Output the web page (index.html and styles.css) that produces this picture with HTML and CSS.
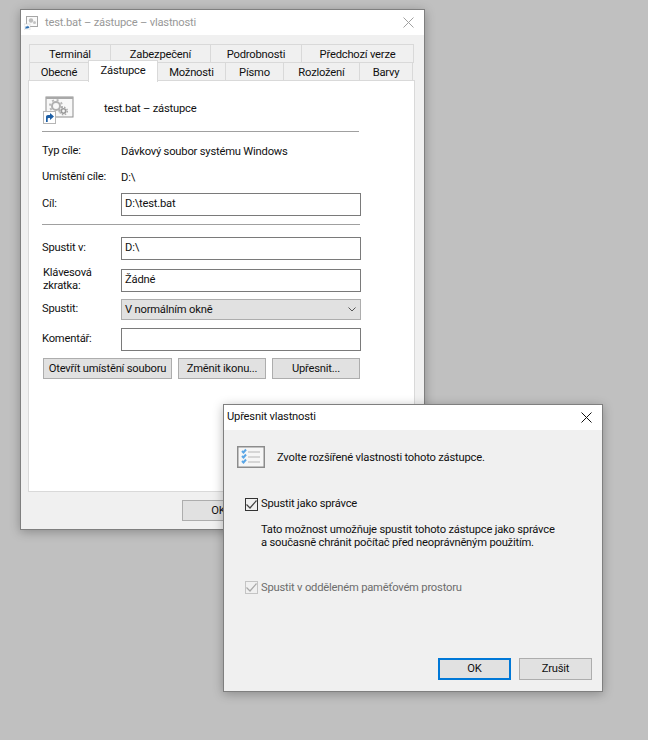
FILE: index.html
```html
<!DOCTYPE html>
<html lang="cs">
<head>
<meta charset="utf-8">
<title>test.bat – zástupce – vlastnosti</title>
<link rel="stylesheet" href="styles.css">
</head>
<body>
<section class="window props">
  <header class="titlebar inactive">
    <svg class="title-icon" width="14" height="14" viewBox="0 0 14 14">
      <rect x="2.5" y="0.5" width="11" height="10" fill="#fafafa" stroke="#a6a6a6"/>
      <circle cx="7" cy="4.5" r="2.2" fill="#bdbdbd"/><circle cx="10.5" cy="6.5" r="1.5" fill="#c4c4c4"/>
      <rect x="0" y="8" width="6" height="6" fill="#fff" stroke="#ccc" stroke-width="0.5"/>
      <path d="M1.5 13v-2.5h2v-1l2 1.8-2 1.6v-1h-1v1.1z" fill="#2a6db0"/>
    </svg>
    <span class="title-text">test.bat – zástupce – vlastnosti</span>
    <svg class="close" width="11" height="11" viewBox="0 0 11 11"><path d="M0.5 0.5l10 10M10.5 0.5l-10 10" stroke="#a0a0a0" fill="none"/></svg>
  </header>
  <div class="client">
    <div class="tabs tabs-back">
      <span class="tab t-term">Terminál</span>
      <span class="tab t-zab">Zabezpečení</span>
      <span class="tab t-pod">Podrobnosti</span>
      <span class="tab t-pre">Předchozí verze</span>
    </div>
    <div class="tabs tabs-front">
      <span class="tab t-obe">Obecné</span>
      <span class="tab active t-zas">Zástupce</span>
      <span class="tab t-moz">Možnosti</span>
      <span class="tab t-pis">Písmo</span>
      <span class="tab t-roz">Rozložení</span>
      <span class="tab t-bar">Barvy</span>
    </div>
    <div class="panel">
      <div class="panel-head">
        <svg class="shortcut-icon" width="32" height="32" viewBox="0 0 32 32">
          <rect x="3" y="1" width="27" height="20" fill="#f8f8f8" stroke="#8f8f8f" stroke-width="1"/>
          <rect x="3" y="1" width="27" height="2" fill="#a8a8a8"/>
          <circle cx="13" cy="10" r="4" fill="none" stroke="#b0b0b0" stroke-width="2"/>
          <circle cx="13" cy="10" r="6" fill="none" stroke="#b8b8b8" stroke-width="2" stroke-dasharray="2 2.7"/>
          <circle cx="20.5" cy="15" r="2.2" fill="none" stroke="#9a9a9a" stroke-width="1.6"/>
          <circle cx="20.5" cy="15" r="3.8" fill="none" stroke="#a8a8a8" stroke-width="1.4" stroke-dasharray="1.5 1.5"/>
          <rect x="0.5" y="15.5" width="12" height="12" fill="#fff" stroke="#b5b5b5"/>
          <path d="M3 26v-5.5q0-1.5 2-1.5h2v-2l4 3.5-4 3.5v-2h-1.500q-.8 0-.8 1v3z" fill="#1d5fa6"/>
        </svg>
        <span class="head-name">test.bat – zástupce</span>
      </div>
      <div class="rule"></div>
      <div class="info-row"><span class="lab">Typ cíle:</span><span>Dávkový soubor systému Windows</span></div>
      <div class="info-row"><span class="lab">Umístění cíle:</span><span>D:\</span></div>
      <div class="field-row first"><span class="lab">Cíl:</span><div class="input">D:\test.bat</div></div>
      <div class="rule rule-second"></div>
      <div class="field-row spaced"><span class="lab">Spustit v:</span><div class="input">D:\</div></div>
      <div class="field-row"><span class="lab two">Klávesová zkratka:</span><div class="input">Žádné</div></div>
      <div class="field-row short"><span class="lab">Spustit:</span>
        <div class="select">V normálním okně
          <svg width="8" height="5" viewBox="0 0 8 5"><path d="M0.500 0.500l3.500 3.500 3.500-3.500" fill="none" stroke="#555"/></svg>
        </div>
      </div>
      <div class="field-row"><span class="lab">Komentář:</span><div class="input"></div></div>
      <div class="btn-row">
        <button class="btn w-open">Otevřít umístění souboru</button>
        <button class="btn w-icon">Změnit ikonu...</button>
        <button class="btn w-adv">Upřesnit...</button>
      </div>
    </div>
    <div class="props-foot"><button class="btn w-ok">OK</button></div>
  </div>
</section>

<section class="window adv">
  <header class="titlebar">
    <span class="title-text dark">Upřesnit vlastnosti</span>
    <svg class="close" width="11" height="11" viewBox="0 0 11 11"><path d="M0.500 0.500l10 10M10.500 0.500l-10 10" stroke="#111" fill="none"/></svg>
  </header>
  <div class="adv-body">
    <div class="adv-head">
      <svg width="28" height="22" viewBox="0 0 28 22">
        <rect x="0.750" y="0.750" width="26.500" height="20.500" fill="#f6f6f6" stroke="#8c8c8c" stroke-width="1.500"/>
        <rect x="11" y="5" width="12" height="2" fill="#d6d6d6"/>
        <rect x="11" y="10" width="12" height="2" fill="#d6d6d6"/>
        <rect x="11" y="15" width="12" height="2" fill="#d6d6d6"/>
        <path d="M5 5l1.500 1.500 2.500-3M5 10l1.500 1.500 2.500-3M5 15l1.500 1.500 2.500-3" fill="none" stroke="#5aa6e6" stroke-width="2"/>
      </svg>
      <span>Zvolte rozšířené vlastnosti tohoto zástupce.</span>
    </div>
    <label class="check">
      <span class="box"><svg width="11" height="9" viewBox="0 0 11 9"><path d="M0.500 4.500l3.500 3.500 6.500-7.500" fill="none" stroke="#444" stroke-width="1.200"/></svg></span>
      <span class="check-text">Spustit jako správce</span>
    </label>
    <p class="desc">Tato možnost umožňuje spustit tohoto zástupce jako správce<br>a současně chránit počítač před neoprávněným použitím.</p>
    <label class="check disabled">
      <span class="box"><svg width="11" height="9" viewBox="0 0 11 9"><path d="M0.500 4.500l3.500 3.500 6.500-7.500" fill="none" stroke="#a8a8a8" stroke-width="1.200"/></svg></span>
      <span>Spustit v odděleném paměťovém prostoru</span>
    </label>
    <div class="adv-foot">
      <button class="btn default">OK</button>
      <button class="btn cancel">Zrušit</button>
    </div>
  </div>
</section>
</body>
</html>
```
FILE: styles.css
```css
* { box-sizing: border-box; }
html, body { margin: 0; height: 100%; }
body {
  position: relative;
  width: 648px;
  height: 740px;
  overflow: hidden;
  background: #c0c0c0;
  font-family: Roboto, "Liberation Sans", sans-serif;
  font-size: 11.2px;
  letter-spacing: -0.2px;
  color: #111;
}
.window {
  position: absolute;
  background: #f0f0f0;
  border: 1px solid #7f7f7f;
  box-shadow: 0 2px 10px rgba(0, 0, 0, .28);
  display: flex;
  flex-direction: column;
}
.props { left: 20px; top: 9px; width: 405px; height: 521px; }
.adv { left: 223px; top: 404px; width: 380px; height: 288px; }

.titlebar {
  height: 25px;
  background: #fff;
  display: flex;
  align-items: center;
  padding: 0 10px 0 3px;
  flex: none;
}
.adv .titlebar .title-text { margin-top: -2px; }
.title-icon { margin: 0 7px 0 0; }
.title-text { color: #999; flex: 1; }
.title-text.dark { color: #111; }
.close { flex: none; }

.client { flex: 1; padding: 9px 9px 0 7px; display: flex; flex-direction: column; }
.tabs { display: flex; height: 18px; padding-left: 1px; }
.tab {
  background: #f0f0f0;
  border: 1px solid #d9d9d9;
  border-bottom: 0;
  margin-right: -1px;
  display: flex;
  align-items: center;
  justify-content: center;
  height: 19px;
  flex: none;
}
.t-term { width: 82px; }
.t-zab { width: 101px; }
.t-pod { width: 92px; }
.t-pre { width: 113px; }
.t-obe { width: 60px; }
.t-zas { width: 70px; }
.t-moz { width: 69px; }
.t-pis { width: 59px; }
.t-roz { width: 77px; }
.t-bar { width: 54px; }
.tab.active {
  background: #fff;
  height: 22px;
  margin-top: -2px;
  position: relative;
  z-index: 2;
  padding-bottom: 2px;
}
.panel {
  width: 387px;
  height: 412px;
  background: #fff;
  border: 1px solid #d9d9d9;
  padding: 0 0 0 13px;
  flex: none;
}
.panel-head { height: 50px; display: flex; align-items: flex-start; padding-top: 15px; }
.shortcut-icon { flex: none; margin: 0 0 0 1px; }
.head-name { margin: 6px 0 0 29px; }
.rule { width: 317px; height: 1px; background: #a0a0a0; }
.rule-second { width: 318px; margin-top: 8px; }
.info-row {
  height: 26px;
  display: grid;
  grid-template-columns: 79px auto;
  align-items: center;
  justify-content: start;
}
.rule + .info-row { margin-top: 6px; }
.field-row {
  display: grid;
  grid-template-columns: 79px 240px;
  align-items: center;
  height: 23px;
  margin-top: 8px;
}
.field-row.short { height: 21px; }
.field-row.first { margin-top: 3px; }
.field-row.spaced { margin-top: 12px; }
.lab { display: block; margin-top: -2px; }
.lab.two { line-height: 13.4px; width: 60px; padding-left: 1px; margin-top: -2px; }
.input {
  height: 23px;
  border: 1px solid #7a7a7a;
  background: #fff;
  padding: 3px 0 0 3px;
}
.select {
  height: 21px;
  background: #e1e1e1;
  border: 1px solid #adadad;
  padding: 0 4px 0 3px;
  display: flex;
  align-items: center;
  justify-content: space-between;
}
.btn {
  height: 21px;
  font: inherit;
  letter-spacing: inherit;
  color: #111;
  background: #e1e1e1;
  border: 1px solid #adadad;
  padding: 0;
  flex: none;
  white-space: nowrap;
}
.btn-row { display: flex; gap: 6px; margin: 7px 0 0 1px; }
.w-open { width: 129px; }
.w-icon { width: 88px; }
.w-adv { width: 88px; }
.props-foot { padding: 8px 0 0 154px; }
.w-ok { width: 73px; }

.adv-body { flex: 1; padding: 15px 0 0 13px; display: flex; flex-direction: column; }
.adv-head { display: flex; align-items: center; gap: 12px; height: 23px; }
.adv-head span { margin-top: 1px; }
.check {
  display: flex;
  align-items: center;
  height: 14px;
  margin: 29px 0 0 8px;
}
.check-text { margin-top: -2px; }
.box {
  width: 13px;
  height: 13px;
  border: 1px solid #333;
  background: #f0f0f0;
  margin-right: 3px;
  display: flex;
  align-items: center;
  justify-content: center;
  flex: none;
}
.desc { margin: 12px 0 0 24px; line-height: 13.3px; }
.check.disabled { margin-top: 31px; color: #6d6d6d; }
.check.disabled .box { border-color: #c4c4c4; }
.adv-foot { display: flex; gap: 8px; margin: 63px 0 0 201px; }
.adv-foot .btn { width: 73px; height: 22px; }
.btn.default { border: 2px solid #0078d7; }
```
